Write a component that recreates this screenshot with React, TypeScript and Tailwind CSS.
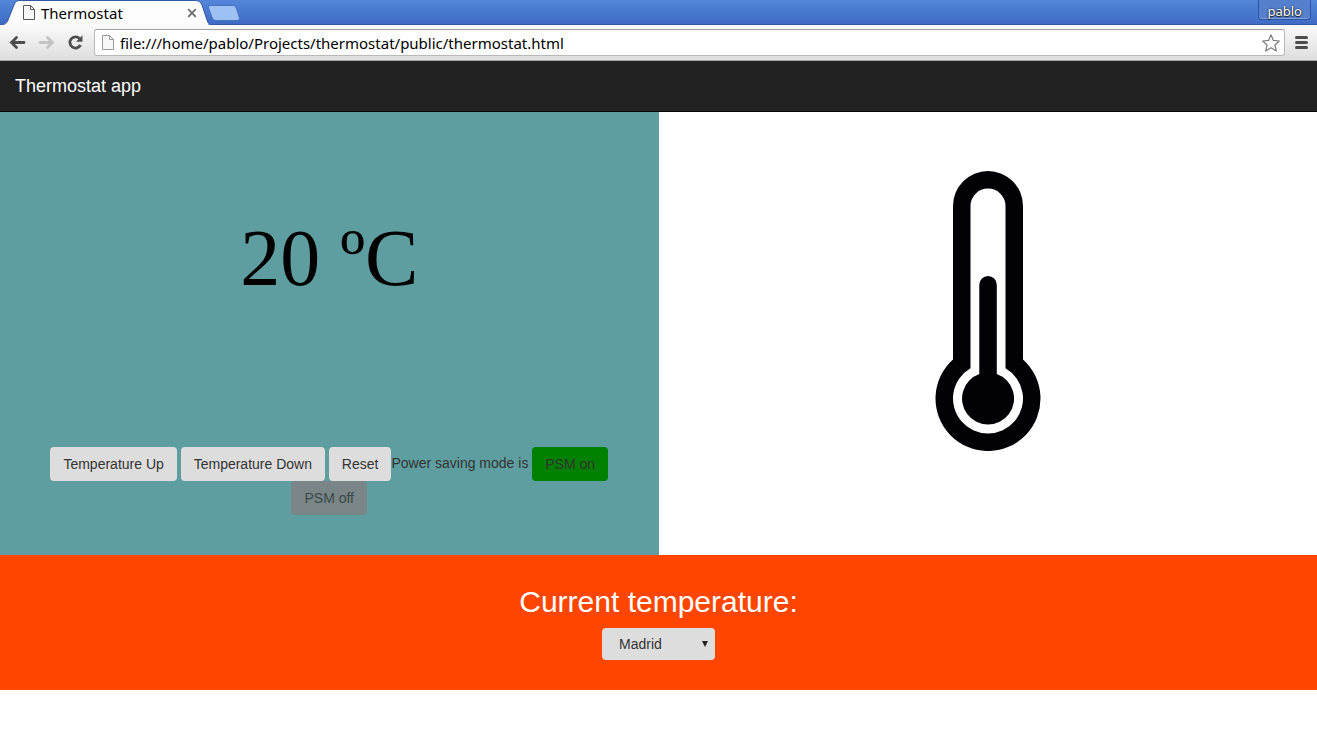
import { useState } from "react";

const buttonBase =
  "inline-block rounded border border-transparent px-3 py-1.5 align-middle text-sm leading-5 text-[#333]";

function PageIcon({ className, color }: { className: string; color: string }) {
  return (
    <svg viewBox="0 0 12 15" className={className} fill="none" stroke={color} aria-hidden="true">
      <path d="M1 .5h6.5l4 4v10H.5V.5H1z" fill="#f8f8f8" />
      <path d="M7.5 .5v4h4" />
    </svg>
  );
}

function TabStrip() {
  return (
    <div className="flex h-[25px] items-start justify-between bg-linear-to-b from-[#5386d8] to-[#3f6ac5] shadow-[inset_0_-1px_0_#3258a5]">
      <div className="flex items-start">
        <div className="relative h-[25px] w-[211px]">
          <svg viewBox="0 0 211 25" className="absolute inset-0 h-full w-full" aria-hidden="true">
            <path
              d="M0 24.5C5 24.5 7 23 8 20L14 5C15 2 16.500 .5 20 .5H195C199 .5 200.500 2 202 5L207 20C208 23 209 24.500 211 24.500V25H0z"
              fill="#fdfdfd"
              stroke="#3258a5"
            />
            <path d="M5 25H208" stroke="#fafafa" strokeWidth="2" />
          </svg>
          <div className="relative flex h-full items-center pl-[23px] pr-3.5">
            <PageIcon className="h-[15px] w-3" color="#555" />
            <span className="ml-1.5 flex-1 text-[15px] leading-5 text-black">Thermostat</span>
            <button type="button" aria-label="Close tab">
              <svg viewBox="0 0 10 10" className="h-2.5 w-2.5" stroke="#6b6b6b" strokeWidth="1.8">
                <path d="M1.200 1.200l7.600 7.600M8.800 1.200L1.200 8.800" />
              </svg>
            </button>
          </div>
        </div>
        <button type="button" aria-label="New tab" className="-ml-1 mt-[5px]">
          <svg viewBox="0 0 33 16" className="h-4 w-[33px]">
            <path
              d="M3.500 .5H25C27.500 .5 28.500 1.200 29.300 3L32.300 12.500C32.800 14.500 32 15.500 30 15.500H9.500C7 15.500 6 14.500 5.200 12.500L1.500 3C1 1.500 1.700 .5 3.500 .5z"
              fill="#9dc1f2"
              stroke="#4672c0"
            />
          </svg>
        </button>
      </div>
      <button
        type="button"
        className="mr-1.5 h-5 rounded-b border border-t-0 border-[#2f55a3] bg-[#5580cd] px-2 pt-0.5 text-[13px] leading-4 text-white [text-shadow:0_0_2px_#000,0_1px_1px_#222] shadow-[inset_0_-1px_0_#7ba0e0]"
      >
        pablo
      </button>
    </div>
  );
}

function Toolbar() {
  return (
    <div className="flex h-9 items-center border-b border-[#a5a5a5] bg-linear-to-b from-[#fafafa] to-[#dedede] pl-[9px] pr-[9px]">
      <button type="button" aria-label="Back">
        <svg viewBox="0 0 17 15" className="h-[15px] w-[17px]" fill="none" stroke="#4d4d4d" strokeWidth="2.800" strokeLinecap="round">
          <path d="M3 7.500h12M7.500 2.500L2.500 7.500l5 5" />
        </svg>
      </button>
      <button type="button" aria-label="Forward" className="ml-3">
        <svg viewBox="0 0 17 15" className="h-[15px] w-[17px]" fill="none" stroke="#c3c3c3" strokeWidth="2.800" strokeLinecap="round">
          <path d="M14 7.500H2M9.500 2.500l5 5l-5 5" />
        </svg>
      </button>
      <button type="button" aria-label="Reload" className="ml-3">
        <svg viewBox="0 0 17 17" className="h-[17px] w-[17px]" fill="none">
          <path d="M12.500 4.500A5.600 5.600 0 1 0 13.500 11" stroke="#4d4d4d" strokeWidth="2.800" />
          <path d="M15.500 1.200V7.800H9z" fill="#4d4d4d" />
        </svg>
      </button>
      <div className="ml-2.5 flex h-[27px] flex-1 items-center rounded-[3px] border border-[#b8b8b8] border-t-[#a2a2a2] bg-white pl-[7px] pr-1">
        <PageIcon className="h-[15px] w-3" color="#999" />
        <input
          type="text"
          aria-label="Address"
          defaultValue="file:///home/pablo/Projects/thermostat/public/thermostat.html"
          className="ml-1.5 min-w-0 flex-1 bg-transparent text-[15px] leading-5 text-black outline-none"
        />
        <button type="button" aria-label="Bookmark this page">
          <svg viewBox="0 0 18 18" className="h-[18px] w-[18px]" fill="#fff" stroke="#7c7c7c" strokeWidth="1.200" strokeLinejoin="round">
            <path d="M9 .8L11.400 6.400L17.300 7L12.900 11L14.300 17L9 13.800L3.700 17L5.100 11L.7 7L6.600 6.400z" />
          </svg>
        </button>
      </div>
      <button type="button" aria-label="Menu" className="ml-2.5">
        <svg viewBox="0 0 13 13" className="h-[13px] w-[13px]" fill="#4d4d4d">
          <rect y="0" width="13" height="3" rx="1.500" />
          <rect y="5" width="13" height="3" rx="1.500" />
          <rect y="10" width="13" height="3" rx="1.500" />
        </svg>
      </button>
    </div>
  );
}

function Thermometer() {
  return (
    <svg viewBox="-0.5 0 106 280" className="h-[280px] w-[106px]" role="img" aria-label="Thermometer">
      <path d="M17.500 35a35 35 0 0 1 70 0V188.400a52.500 52.500 0 1 1-70 0z" fill="#020104" />
      <path d="M35 35a17.500 17.500 0 0 1 35 0V197.200a35 35 0 1 1-35 0z" fill="#fff" />
      <path d="M43.800 113.700a8.750 8.750 0 0 1 17.500 0V203a26 26 0 1 1-17.500 0z" fill="#020104" />
    </svg>
  );
}

export default function App() {
  const [temperature, setTemperature] = useState(20);
  const [city, setCity] = useState("Madrid");

  return (
    <div className="min-h-screen bg-white font-['Liberation_Sans',Arial,sans-serif] text-sm leading-5 text-[#333]">
      <div className="font-['Noto_Sans',sans-serif]">
        <TabStrip />
        <Toolbar />
      </div>

      <nav className="border-b border-[#080808] bg-[#222] px-[15px] py-[15px]">
        <a href="#" className="block text-lg leading-5 text-white">
          Thermostat app
        </a>
      </nav>

      <main className="grid grid-cols-2">
        <section className="bg-[#5f9ea0] px-[15px] pb-10 pt-[100px] text-center">
          <p className="mb-[143px] font-['Liberation_Serif',serif] text-[80px] leading-[92px] text-black">
            {temperature} ºC
          </p>
          <div>
            <button type="button" className={`${buttonBase} bg-[#ddd]`} onClick={() => setTemperature(temperature + 1)}>
              Temperature Up
            </button>{" "}
            <button type="button" className={`${buttonBase} bg-[#ddd]`} onClick={() => setTemperature(temperature - 1)}>
              Temperature Down
            </button>{" "}
            <button type="button" className={`${buttonBase} bg-[#ddd]`} onClick={() => setTemperature(20)}>
              Reset
            </button>
            Power saving mode is{" "}
            <button type="button" className={`${buttonBase} bg-[#008000]`}>
              PSM on
            </button>{" "}
            <button type="button" disabled className={`${buttonBase} bg-[#808080] opacity-80`}>
              PSM off
            </button>
          </div>
        </section>
        <section className="flex items-start justify-center bg-white pt-[59px]">
          <Thermometer />
        </section>
      </main>

      <section className="flex flex-col items-center bg-[#ff4500] pb-[30px] pt-[30px]">
        <label htmlFor="city" className="mb-2.5 text-3xl leading-[33px] text-white">
          Current temperature:
        </label>
        <div className="relative">
          <select
            id="city"
            value={city}
            onChange={(event) => setCity(event.target.value)}
            className="block h-8 w-[113px] appearance-none rounded bg-[#ddd] pl-[17px] text-sm leading-5 text-[#333]"
          >
            <option>Madrid</option>
            <option>London</option>
            <option>Barcelona</option>
          </select>
          <svg viewBox="0 0 6 6" className="pointer-events-none absolute right-[7px] top-[13px] h-1.5 w-1.5" fill="#222" aria-hidden="true">
            <path d="M0 0h6L3 6z" />
          </svg>
        </div>
      </section>
    </div>
  );
}
